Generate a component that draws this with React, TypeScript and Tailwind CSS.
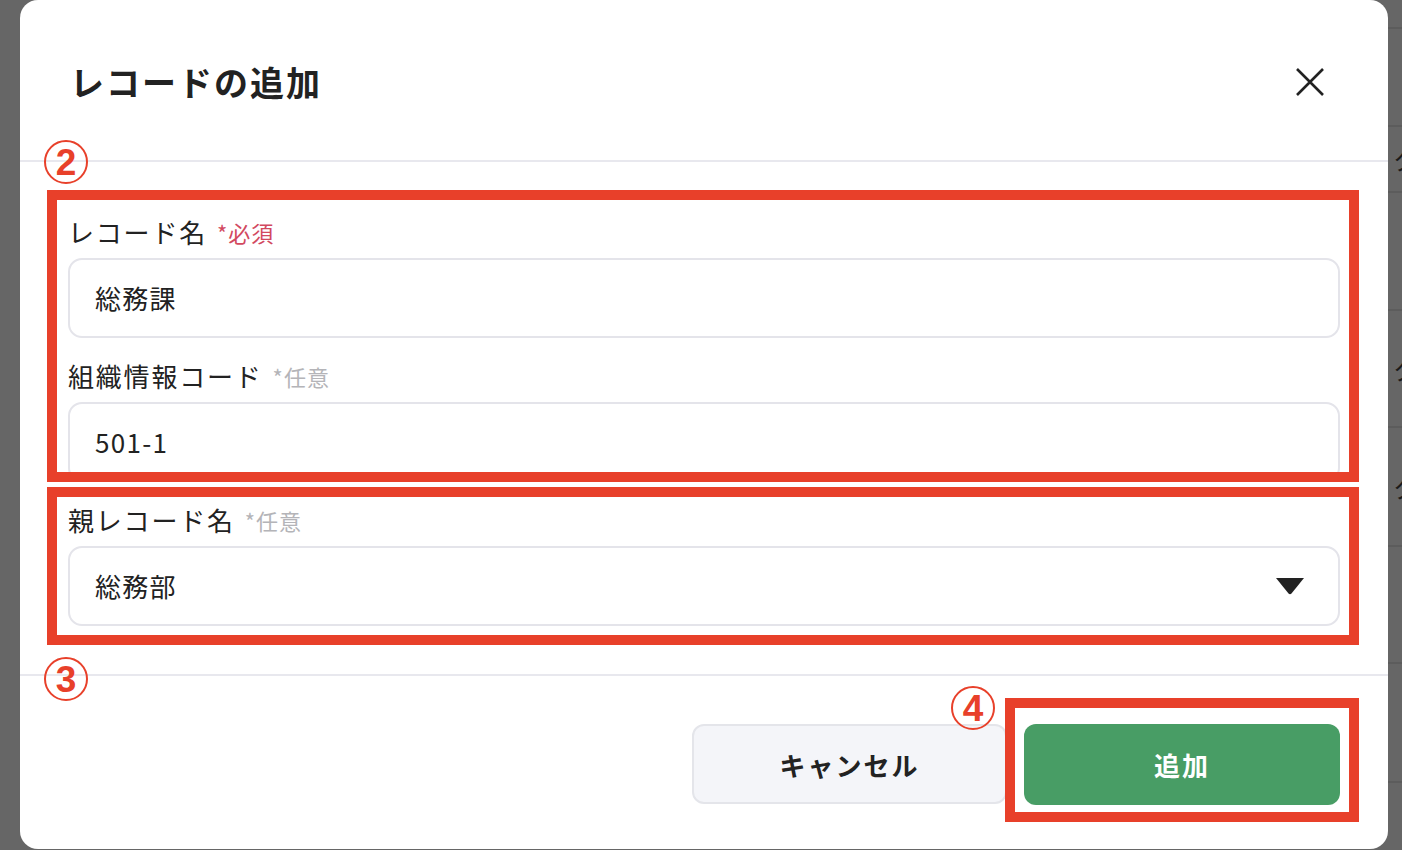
const jp = "font-['Noto_Sans_CJK_JP','Noto_Sans',sans-serif]";

function Field({
  label,
  note,
  required,
  value,
  select,
}: {
  label: string;
  note: string;
  required?: boolean;
  value: string;
  select?: boolean;
}) {
  return (
    <div className="flex flex-col">
      <div className="flex h-[36px] items-center gap-[10px]">
        <span className="text-[26px] leading-none tracking-[1.8px] text-[#222]">{label}</span>
        <span
          className={`text-[22px] leading-none tracking-[1px] ${required ? "text-[#d2495f]" : "text-[#b4b4b8]"}`}
        >
          {note}
        </span>
      </div>
      <div className="mt-[8px] flex h-[80px] items-center justify-between rounded-[14px] border-2 border-[#e4e4ea] bg-white pl-[25px] pr-[34px]">
        <span className="text-[26px] leading-none tracking-[1.3px] text-[#222]">{value}</span>
        {select && (
          <svg width="28" height="17" viewBox="0 0 28 17">
            <path d="M0 0 H28 L15.5 15.5 Q14 17 12.5 15.5 Z" fill="#222" />
          </svg>
        )}
      </div>
    </div>
  );
}

function Circled({ n }: { n: string }) {
  return (
    <div className="flex h-[44px] w-[44px] items-center justify-center rounded-full border-2 border-[#e8402a]">
      <span className="font-['Liberation_Sans',sans-serif] text-[37px] font-bold leading-none text-[#e8402a]">
        {n}
      </span>
    </div>
  );
}

const rows = [
  { h: "h-[29px]", g: false },
  { h: "h-[98px]", g: false },
  { h: "h-[66px]", g: true },
  { h: "h-[118px]", g: false },
  { h: "h-[117px]", g: true },
  { h: "h-[119px]", g: true },
  { h: "h-[117px]", g: false },
  { h: "h-[119px]", g: false },
];

export default function App() {
  return (
    <div className={`relative flex h-[850px] w-[1402px] overflow-hidden bg-[#666666] ${jp}`}>
      <div className="w-[20px] shrink-0" />

      <div className="flex h-[849px] w-[1368px] shrink-0 flex-col rounded-[18px] bg-white">
        <div className="flex h-[160px] items-center justify-between pl-[50px] pr-[64px] pt-[4px]">
          <h1 className="text-[34px] font-bold leading-none tracking-[2px] text-[#222]">レコードの追加</h1>
          <svg width="28" height="28" viewBox="0 0 28 28">
            <path d="M1 1 L27 27 M27 1 L1 27" stroke="#222" strokeWidth="2.6" />
          </svg>
        </div>
        <div className="h-[2px] bg-[#e8e8ee]" />

        <div className="flex flex-col gap-[20px] px-[48px] pb-[48px] pt-[52px]">
          <Field label="レコード名" note="*必須" required value="総務課" />
          <Field label="組織情報コード" note="*任意" value="501-1" />
          <Field label="親レコード名" note="*任意" value="総務部" select />
        </div>
        <div className="h-[2px] bg-[#e8e8ee]" />

        <div className="flex justify-end gap-[17px] px-[48px] pt-[48px]">
          <button className="flex h-[80px] w-[315px] items-center justify-center rounded-[12px] border-2 border-[#e4e5ea] bg-[#f4f5f9] text-[26px] font-bold tracking-[2px] text-[#222]">
            キャンセル
          </button>
          <button className="flex h-[81px] w-[316px] items-center justify-center rounded-[12px] bg-[#489d65] text-[26px] font-bold tracking-[2px] text-white">
            追加
          </button>
        </div>
      </div>

      <div className="flex flex-1 flex-col">
        {rows.map((r, i) => (
          <div
            key={i}
            className={`${r.h} flex items-center overflow-hidden whitespace-nowrap border-b-2 border-[#5c5c5c] pl-[5px]`}
          >
            {r.g && <span className="text-[26px] leading-none text-[#1a1a1a]">タ</span>}
          </div>
        ))}
      </div>

      {/* annotations */}
      <div className="absolute left-[47px] top-[190px] h-[292px] w-[1312px] border-[10px] border-[#e8402a]" />
      <div className="absolute left-[47px] top-[487px] h-[158px] w-[1312px] border-[10px] border-[#e8402a]" />
      <div className="absolute left-[1005px] top-[698px] h-[124px] w-[354px] border-[10px] border-[#e8402a]" />
      <div className="absolute left-[44px] top-[140px]">
        <Circled n="2" />
      </div>
      <div className="absolute left-[44px] top-[657px]">
        <Circled n="3" />
      </div>
      <div className="absolute left-[951px] top-[686px]">
        <Circled n="4" />
      </div>
    </div>
  );
}
